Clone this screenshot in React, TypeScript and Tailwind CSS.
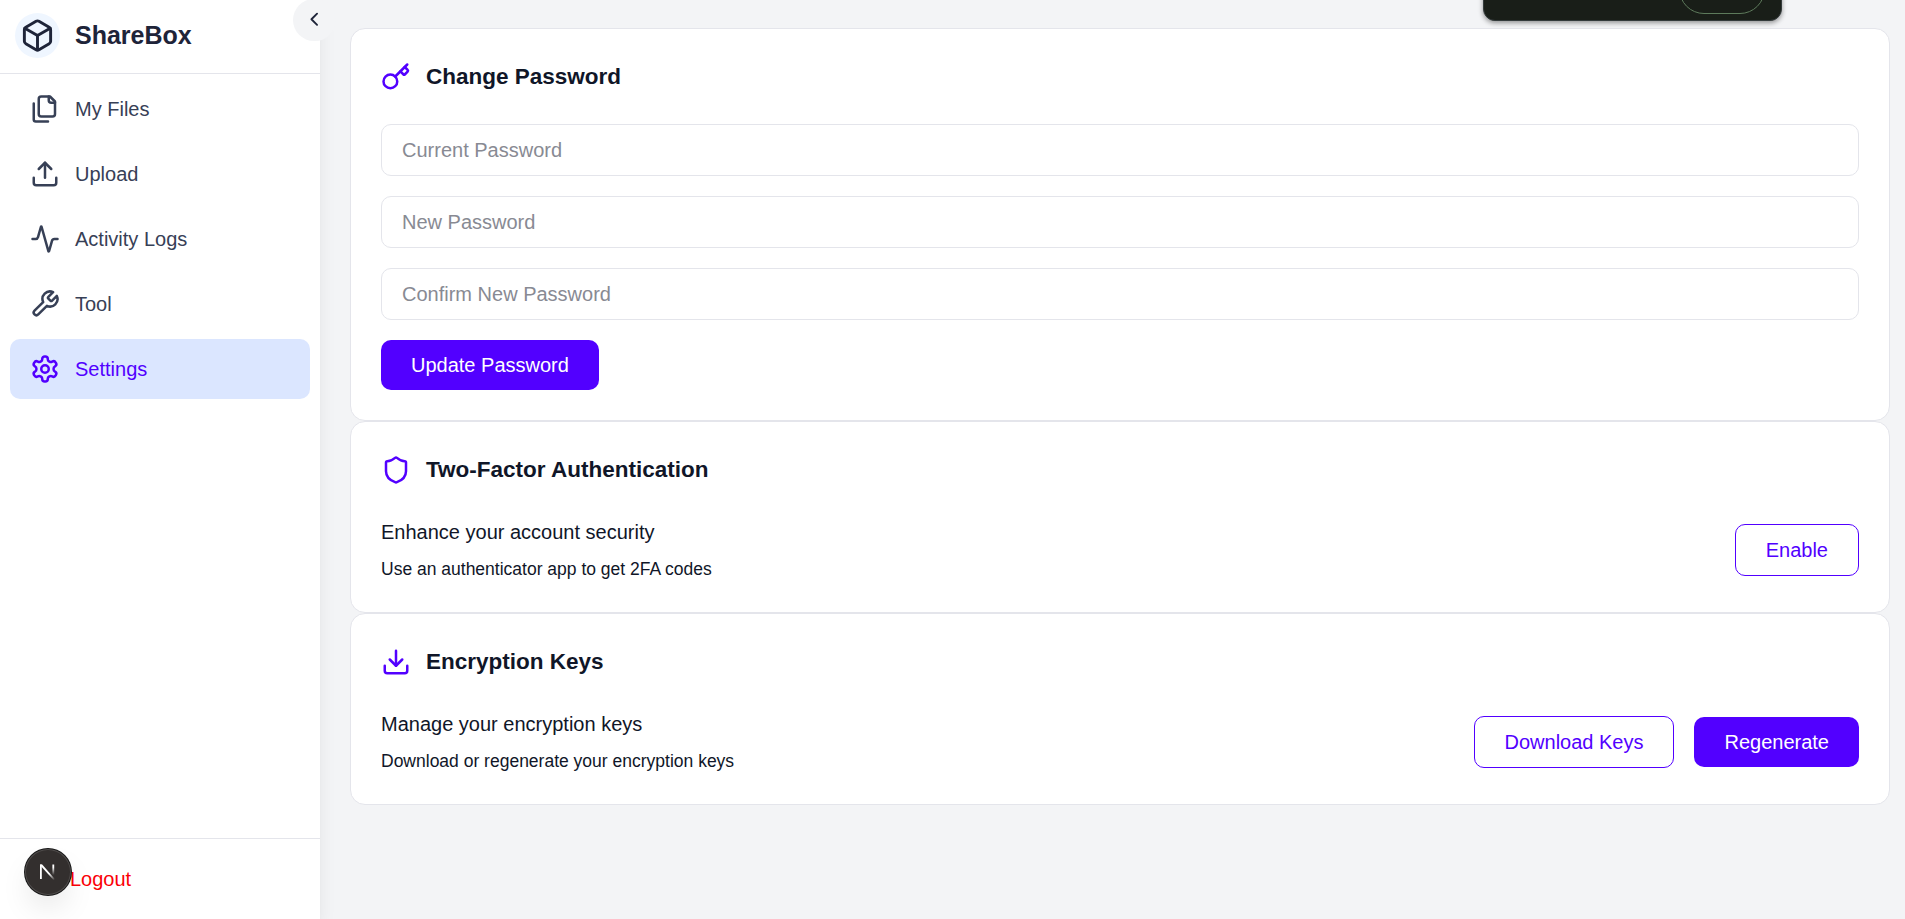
import { LuActivity, LuBox, LuChevronLeft, LuDownload, LuFiles, LuKey, LuSettings, LuShield, LuUpload, LuWrench } from "react-icons/lu";
import type { ReactNode } from "react";

const navItems = [
  { label: "My Files", Icon: LuFiles, active: false },
  { label: "Upload", Icon: LuUpload, active: false },
  { label: "Activity Logs", Icon: LuActivity, active: false },
  { label: "Tool", Icon: LuWrench, active: false },
  { label: "Settings", Icon: LuSettings, active: true },
];

function Card({ icon, title, children }: { icon: ReactNode; title: string; children: ReactNode }) {
  return (
    <section className="rounded-[15px] border border-[#e4e5eb] bg-white p-[30px]">
      <div className="mb-[30px] flex items-center gap-[15px] text-[#5200ff]">
        {icon}
        <h2 className="text-[22.5px] leading-[35px] font-semibold text-[#101628]">{title}</h2>
      </div>
      {children}
    </section>
  );
}

function PrimaryButton({ children }: { children: ReactNode }) {
  return (
    <button className="rounded-[10px] bg-[#5200ff] px-[30px] py-[10px] leading-[30px] text-white">{children}</button>
  );
}

function OutlineButton({ children }: { children: ReactNode }) {
  return (
    <button className="rounded-[10px] border border-[#5200ff] px-[30px] py-[10px] leading-[30px] text-[#5200ff]">
      {children}
    </button>
  );
}

function Description({ title, detail }: { title: string; detail: string }) {
  return (
    <div className="flex flex-col gap-[10px]">
      <p className="leading-[30px]">{title}</p>
      <p className="text-[17.5px] leading-[25px]">{detail}</p>
    </div>
  );
}

export default function App() {
  return (
    <div className="relative flex h-[919px] w-full overflow-hidden bg-[#f3f4f6] font-['Liberation_Sans',sans-serif] text-[20px] text-[#101628]">
      <aside className="relative flex w-[320px] shrink-0 flex-col bg-white shadow-[0_12px_19px_-4px_rgba(0,0,0,0.1),0_5px_7px_-5px_rgba(0,0,0,0.1)]">
        <div className="flex h-[74px] items-center gap-[15px] border-b border-[#e4e5eb] pl-[15px] text-[#1e2439]">
          <div className="-mt-[2px] flex size-[45px] items-center justify-center rounded-full bg-[#eff6ff]">
            <LuBox className="size-[35px]" />
          </div>
          <span className="-mt-[3px] text-[25px] leading-[35px] font-bold">ShareBox</span>
        </div>
        <nav className="flex flex-1 flex-col gap-[5px] px-[10px] pt-[5px]">
          {navItems.map(({ label, Icon, active }) => (
            <a
              key={label}
              className={
                active
                  ? "flex h-[60px] items-center gap-[15px] rounded-[10px] bg-[#dbe6ff] px-[20px] text-[#5200ff]"
                  : "flex h-[60px] items-center gap-[15px] rounded-[10px] px-[20px] text-[#374056]"
              }
            >
              <Icon className="size-[30px]" />
              <span>{label}</span>
            </a>
          ))}
        </nav>
        <div className="h-[81px] border-t border-[#e4e5eb] pt-[25px] pl-[70px] leading-[30px] text-[#fb0007]">Logout</div>
        <button className="absolute -top-[1.5px] left-[293px] flex size-[42.5px] items-center justify-center rounded-full bg-[#f3f4f6] pb-[2px] text-[#1e2439]">
          <LuChevronLeft className="size-[22.5px]" />
        </button>
      </aside>
      <main className="flex flex-1 flex-col pt-[28px] pr-[15px] pl-[30px]">
        <Card icon={<LuKey className="size-[30px]" />} title="Change Password">
          <div className="flex flex-col items-start gap-[20px]">
            {["Current Password", "New Password", "Confirm New Password"].map((label) => (
              <input
                key={label}
                type="password"
                placeholder={label}
                className="h-[52px] w-full rounded-[10px] border border-[#e4e5eb] px-[20px] placeholder:text-[#888a93]"
              />
            ))}
            <PrimaryButton>Update Password</PrimaryButton>
          </div>
        </Card>
        <Card icon={<LuShield className="size-[30px]" />} title="Two-Factor Authentication">
          <div className="flex items-center justify-between">
            <Description title="Enhance your account security" detail="Use an authenticator app to get 2FA codes" />
            <OutlineButton>Enable</OutlineButton>
          </div>
        </Card>
        <Card icon={<LuDownload className="size-[30px]" />} title="Encryption Keys">
          <div className="flex items-center justify-between">
            <Description title="Manage your encryption keys" detail="Download or regenerate your encryption keys" />
            <div className="flex items-center gap-[20px]">
              <OutlineButton>Download Keys</OutlineButton>
              <PrimaryButton>Regenerate</PrimaryButton>
            </div>
          </div>
        </Card>
      </main>
      <div className="absolute -top-[60px] left-[1483px] h-[81px] w-[299px] rounded-[12px] border border-[#343b3c] bg-[#191e18] shadow-[0_2px_5px_rgba(0,0,0,0.4)]">
        <div className="absolute right-[16px] bottom-[6px] h-[50px] w-[86px] rounded-[25px] border border-[#5d7a5b]" />
      </div>
      <div className="absolute top-[848.5px] left-[24.5px] flex size-[46px] items-center justify-center rounded-full bg-[#332f2e] shadow-[0_0_0_1px_#171717,inset_0_0_0_1px_rgba(255,255,255,0.14),0_16px_32px_-8px_rgba(0,0,0,0.17)]">
        <svg viewBox="0 0 15 16" className="mt-px h-[16px] w-[15px]" fill="none">
          <defs>
            <linearGradient id="stem" x1="0" y1="0" x2="0" y2="11" gradientUnits="userSpaceOnUse">
              <stop offset="0.3" stopColor="white" />
              <stop offset="1" stopColor="white" stopOpacity="0" />
            </linearGradient>
            <linearGradient id="diagonal" x1="9" y1="10" x2="14.5" y2="16" gradientUnits="userSpaceOnUse">
              <stop offset="0" stopColor="white" />
              <stop offset="1" stopColor="white" stopOpacity="0" />
            </linearGradient>
          </defs>
          <rect x="0" y="0.5" width="1.8" height="14.5" fill="white" />
          <path d="M0 0.5H2.2L15 15.2L13.8 16.3L0.8 2Z" fill="url(#diagonal)" />
          <rect x="12.4" y="0.5" width="1.8" height="10.5" fill="url(#stem)" />
        </svg>
      </div>
    </div>
  );
}
